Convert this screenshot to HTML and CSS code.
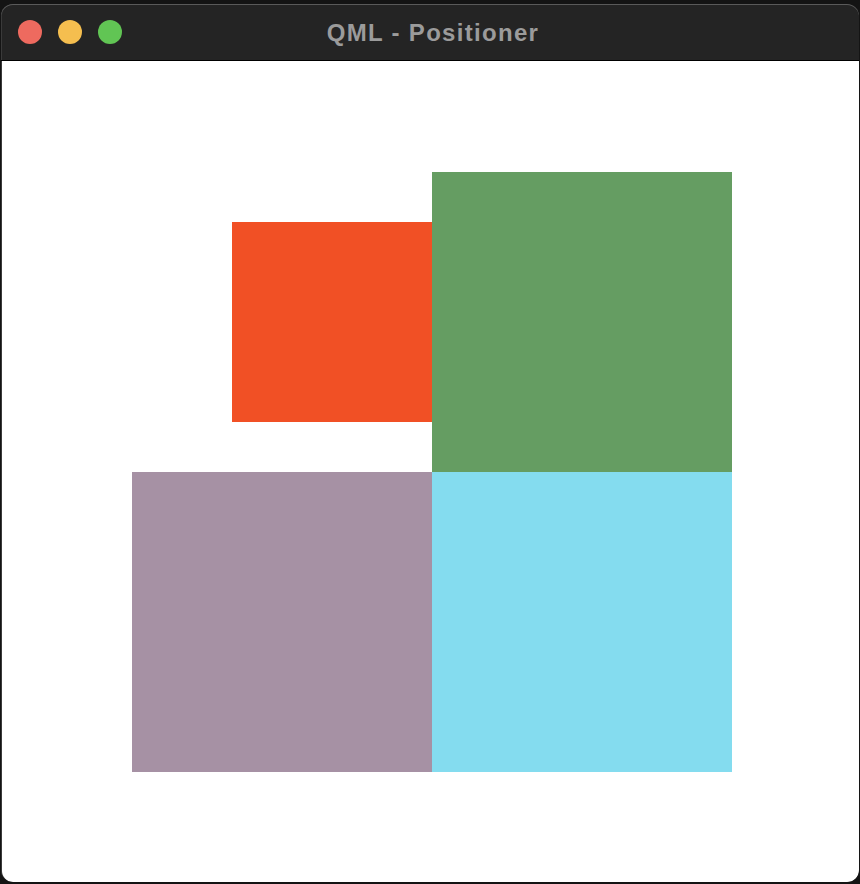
FILE: index.html
```html
<!DOCTYPE html>
<html>
<head>
<meta charset="utf-8">
<link rel="stylesheet" href="styles.css">
</head>
<body>
<div class="window">
  <div class="titlebar">
    <div class="lights">
      <span class="light red"></span>
      <span class="light yellow"></span>
      <span class="light green"></span>
    </div>
    <div class="title">QML - Positioner</div>
  </div>
  <div class="content">
    <div class="board">
      <div class="box orange"></div>
      <div class="box sage"></div>
      <div class="box mauve"></div>
      <div class="box sky"></div>
    </div>
  </div>
</div>
</body>
</html>
```
FILE: styles.css
```css
html, body {
  margin: 0;
  padding: 0;
  background: #141414;
  width: 860px;
  height: 884px;
  overflow: hidden;
}
.window {
  margin: 4px 0 0 1px;
  width: 858px;
  height: 878px;
  border-radius: 12px;
  overflow: hidden;
  background: #242424;
  box-shadow: inset 0 1px 0 #5a5a5a, inset 1px 0 0 #3a3a3a;
  display: flex;
  flex-direction: column;
}
.titlebar {
  height: 56px;
  flex: none;
  position: relative;
  display: flex;
  align-items: center;
  justify-content: center;
  border-bottom: 1px solid #000;
}
.lights {
  position: absolute;
  left: 17px;
  top: 16px;
  display: flex;
  gap: 16px;
}
.light {
  width: 24px;
  height: 24px;
  border-radius: 50%;
  display: block;
}
.red { background: #ee6a5f; }
.yellow { background: #f5be4f; }
.green { background: #61c554; }
.title {
  font-family: "Liberation Sans", Arial, sans-serif;
  font-weight: bold;
  font-size: 24px;
  letter-spacing: 1.3px;
  color: #9b9b9b;
  margin-left: 6px;
  margin-top: 2px;
}
.content {
  flex: 1;
  background: #fff;
  margin-left: 1px;
  border-radius: 0 0 11px 11px;
  padding: 111px 0 0 130px;
}
.board {
  display: grid;
  grid-template-columns: 100px 200px 300px;
  grid-template-rows: 50px 200px 50px 300px;
}
.orange { background: #f15025; grid-column: 2; grid-row: 2; }
.sage { background: #659d62; grid-column: 3; grid-row: 1 / 4; }
.mauve { background: #a691a4; grid-column: 1 / 3; grid-row: 4; }
.sky { background: #84dcef; grid-column: 3; grid-row: 4; }
```
